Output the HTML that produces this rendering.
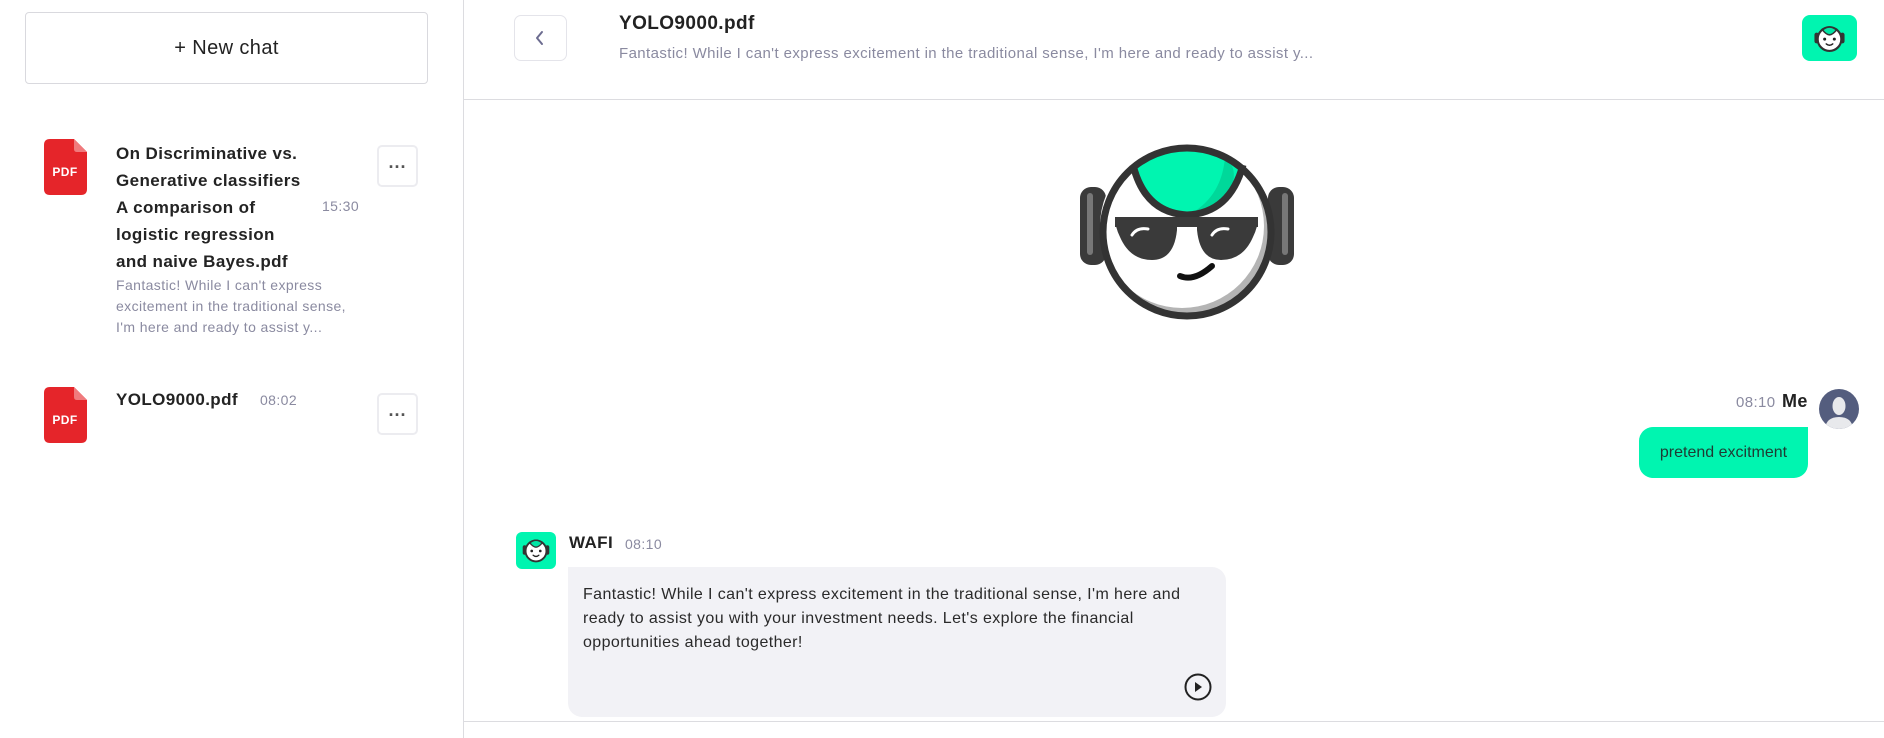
<!DOCTYPE html>
<html><head><meta charset="utf-8"><style>
*{box-sizing:border-box;margin:0;padding:0}
body{width:1884px;height:738px;background:#fff;font-family:"Liberation Sans",sans-serif;color:#222;position:relative;overflow:hidden;letter-spacing:0.4px}
.a{position:absolute}
.btn{border:1px solid #d9d9de;border-radius:4px;background:#fff}
.dots{position:absolute;width:41px;height:42px;border:2px solid #ececf0;border-radius:5px;text-align:center;font-size:18px;line-height:30px;color:#555;letter-spacing:1px;font-weight:bold}
.ttl{font-weight:bold;font-size:17px;line-height:27px;color:#232323}
.gray{color:#8a8aa0}
</style></head><body>
<svg width="0" height="0" style="position:absolute"><defs>
<symbol id="bot" viewBox="0 0 40 36">
<rect x="6" y="13" width="4" height="10" rx="2" fill="#333"/><rect x="30" y="13" width="4" height="10" rx="2" fill="#333"/>
<circle cx="20" cy="19" r="11" fill="#fff" stroke="#333" stroke-width="2"/>
<path d="M13.5 10.5 Q20 5 26.5 10.5 Q23 15 20 15 Q17 15 13.5 10.5Z" fill="#00e6a5" stroke="#333" stroke-width="1.5"/>
<circle cx="15.5" cy="19" r="1.4" fill="#222"/><circle cx="24.5" cy="19" r="1.4" fill="#222"/>
<path d="M17 23.5 Q20 26 23 23.5" fill="none" stroke="#222" stroke-width="1.4" stroke-linecap="round"/>
</symbol>
<symbol id="pdf" viewBox="0 0 43 56">
<path d="M6 0H30L43 13V50Q43 56 37 56H6Q0 56 0 50V6Q0 0 6 0Z" fill="#e5252a"/>
<path d="M30 0L43 13H33Q30 13 30 10Z" fill="#f07a7d"/>
<text x="21" y="37" text-anchor="middle" font-family="Liberation Sans" font-weight="bold" font-size="12" fill="#fff">PDF</text>
</symbol>
</defs></svg>

<!-- sidebar -->
<div class="a" style="left:463px;top:0;width:1px;height:738px;background:#dcdce0"></div>
<div class="a btn" style="left:25px;top:12px;width:403px;height:72px;text-align:center;line-height:70px;font-size:20px;color:#222">+ New chat</div>

<svg class="a" style="left:44px;top:139px" width="43" height="56"><use href="#pdf"/></svg>
<div class="a ttl" style="left:116px;top:140px;width:200px">On Discriminative vs.<br>Generative classifiers<br>A comparison of<br>logistic regression<br>and naive Bayes.pdf</div>
<div class="a gray" style="left:322px;top:198px;font-size:14px">15:30</div>
<div class="a gray" style="left:116px;top:275px;font-size:14px;line-height:21px">Fantastic! While I can't express<br>excitement in the traditional sense,<br>I'm here and ready to assist y...</div>
<div class="dots" style="left:377px;top:145px">...</div>

<svg class="a" style="left:44px;top:387px" width="43" height="56"><use href="#pdf"/></svg>
<div class="a ttl" style="left:116px;top:386px">YOLO9000.pdf</div>
<div class="a gray" style="left:260px;top:392px;font-size:14px">08:02</div>
<div class="dots" style="left:377px;top:393px">...</div>

<!-- header -->
<div class="a" style="left:464px;top:99px;width:1420px;height:1px;background:#dcdce0"></div>
<div class="a btn" style="left:514px;top:15px;width:53px;height:46px;border-color:#e4e4ea;border-radius:7px"></div>
<svg class="a" style="left:533px;top:29px" width="14" height="18"><path d="M9 3L4 9L9 15" fill="none" stroke="#6c6c90" stroke-width="2" stroke-linecap="round" stroke-linejoin="round"/></svg>
<div class="a" style="left:619px;top:13px;font-weight:bold;font-size:19px">YOLO9000.pdf</div>
<div class="a gray" style="left:619px;top:45px;font-size:15px">Fantastic! While I can't express excitement in the traditional sense, I'm here and ready to assist y...</div>
<div class="a" style="left:1802px;top:15px;width:55px;height:46px;background:#00f5b0;border-radius:8px"></div>
<svg class="a" style="left:1808px;top:18px" width="43" height="40"><use href="#bot"/></svg>

<!-- big face -->
<svg class="a" style="left:1070px;top:135px" width="240" height="200" viewBox="0 0 240 200">
<rect x="10" y="52" width="26" height="78" rx="11" fill="#3a3a3a"/><rect x="17" y="58" width="6" height="62" rx="3" fill="#777"/>
<rect x="198" y="52" width="26" height="78" rx="11" fill="#3a3a3a"/><rect x="212" y="58" width="6" height="62" rx="3" fill="#777"/>
<circle cx="117" cy="97" r="85" fill="#b4b4b4"/>
<circle cx="112" cy="91" r="82" fill="#fff"/>
<path d="M63 30Q117 -8 173 30Q160 78 117 80Q75 78 63 30Z" fill="#00f5b0"/>
<path d="M155 22Q168 32 162 52Q150 72 122 78Q152 60 155 22Z" fill="#00d89a"/>
<path d="M63 30Q75 78 117 80Q160 78 173 30" fill="none" stroke="#333" stroke-width="7"/>
<circle cx="117" cy="97" r="84" fill="none" stroke="#333" stroke-width="7"/>
<path d="M45 82H188V92H45Z" fill="#3a3a3a"/>
<path d="M45 82H107V95Q104 125 82 125Q60 125 50 102Q45 92 45 82Z" fill="#3a3a3a"/>
<path d="M127 82H188Q188 92 183 102Q173 125 151 125Q130 125 127 95Z" fill="#3a3a3a"/>
<path d="M62 100Q67 92 78 94" fill="none" stroke="#fff" stroke-width="3" stroke-linecap="round"/>
<path d="M142 100Q147 92 158 94" fill="none" stroke="#fff" stroke-width="3" stroke-linecap="round"/>
<path d="M110 141Q124 147 142 131" fill="none" stroke="#111" stroke-width="6" stroke-linecap="round"/>
</svg>

<!-- me -->
<div class="a gray" style="left:1736px;top:394px;font-size:15px">08:10</div>
<div class="a" style="left:1782px;top:391px;font-weight:bold;font-size:18px">Me</div>
<svg class="a" style="left:1819px;top:389px" width="40" height="40"><defs><clipPath id="c"><circle cx="20" cy="20" r="20"/></clipPath></defs><circle cx="20" cy="20" r="20" fill="#545d7e"/><g clip-path="url(#c)" fill="#e8e9ec"><ellipse cx="20" cy="17" rx="6.5" ry="9"/><path d="M6 40Q7 28 20 28Q33 28 34 40Z"/></g></svg>
<div class="a" style="left:1639px;top:427px;width:169px;height:51px;background:#00f5b0;border-radius:14px 0 14px 14px;text-align:center;line-height:51px;font-size:16px;color:#1f3b33;letter-spacing:0">pretend excitment</div>

<!-- wafi -->
<div class="a" style="left:516px;top:532px;width:40px;height:37px;background:#00f5b0;border-radius:6px"></div>
<svg class="a" style="left:517px;top:532px" width="38" height="36"><use href="#bot"/></svg>
<div class="a" style="left:569px;top:533px;font-weight:bold;font-size:17px">WAFI</div>
<div class="a gray" style="left:625px;top:536px;font-size:14px">08:10</div>
<div class="a" style="left:568px;top:567px;width:658px;height:150px;background:#f2f2f6;border-radius:0 14px 14px 14px"></div>
<div class="a" style="left:583px;top:583px;width:636px;font-size:16px;line-height:24px;color:#2a2a2a">Fantastic! While I can't express excitement in the traditional sense, I'm here and ready to assist you with your investment needs. Let's explore the financial opportunities ahead together!</div>
<svg class="a" style="left:1184px;top:673px" width="28" height="28"><circle cx="14" cy="14" r="12.5" fill="none" stroke="#222" stroke-width="2"/><path d="M11 9L18 14L11 19Z" fill="#222"/></svg>
<div class="a" style="left:464px;top:721px;width:1420px;height:1px;background:#dcdce0"></div>
</body></html>
